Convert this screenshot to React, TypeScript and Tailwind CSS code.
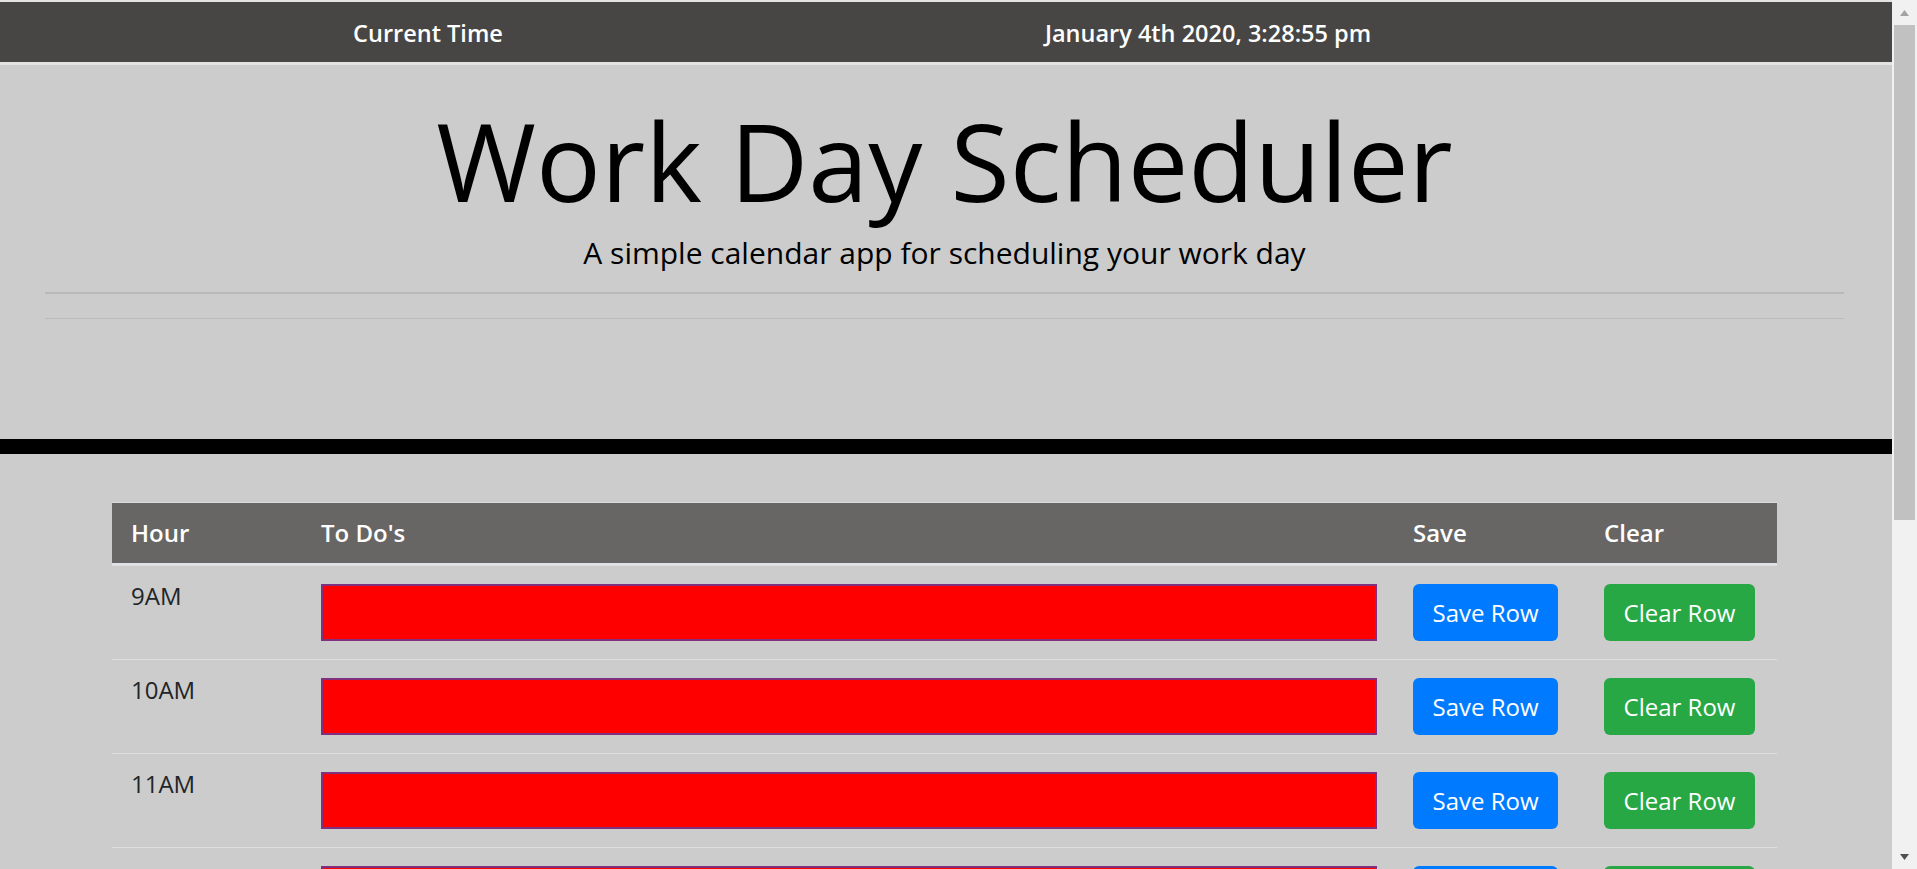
import React from 'react';

const hours = ['9AM', '10AM', '11AM', '12PM', '1PM', '2PM', '3PM', '4PM', '5PM'];

const ScheduleRow = ({ hour }: { hour: string }) => (
  <div className="flex border-t border-[#dedede]">
    <div className="w-[190px] px-[19px] pt-[12px] text-[24px] leading-[36px] text-[#212529]">{hour}</div>
    <div className="w-[1092px] pl-[19px] pr-[17px] py-[18px]">
      <textarea className="block w-full h-[57px] resize-none border-2 border-[#80307f] bg-[#ff0000] outline-none" />
    </div>
    <div className="w-[192px] pl-[19px] py-[18px]">
      <button className="h-[57px] w-[145px] rounded-[6px] bg-[#007bff] text-[24px] leading-[36px] text-white">
        Save Row
      </button>
    </div>
    <div className="w-[191px] pl-[18px] py-[18px]">
      <button className="h-[57px] w-[151px] rounded-[6px] bg-[#28a745] text-[24px] leading-[36px] text-white">
        Clear Row
      </button>
    </div>
  </div>
);

export default function App() {
  return (
    <div className="flex h-screen overflow-hidden bg-[#cccccc] font-['Open_Sans',sans-serif]">
      <div className="flex-1 overflow-hidden">
        {/* top time bar */}
        <div className="border-t-2 border-[#e4e4e4]">
          <div className="flex h-[60px] items-center bg-[#474644] pt-[4px] text-[23.5px] font-semibold text-white">
            <div className="w-[856px] text-center">Current Time</div>
            <div className="w-[704px] text-center">January 4th 2020, 3:28:55 pm</div>
          </div>
          <div className="h-[3px] bg-[#e2e2e2]" />
        </div>

        {/* jumbotron */}
        <div className="h-[374px] px-[45px] pr-[48px] pt-[31px]">
          <h1 className="text-center text-[108px] font-normal leading-[130px] text-black">Work Day Scheduler</h1>
          <p className="mt-[4px] text-center text-[30px] font-normal leading-[45px] text-black">
            A simple calendar app for scheduling your work day
          </p>
          <div className="mt-[17px] h-[2px] bg-[#b9b9b9]" />
          <div className="mt-[24px] h-px bg-[#bbbbbb]" />
        </div>
        <div className="h-[15px] bg-black" />

        {/* schedule table */}
        <div className="ml-[112px] mt-[48px] w-[1665px]">
          <div className="flex h-[61px] items-center border-t border-[#dadada] bg-[#686664] text-[24px] font-semibold text-white">
            <div className="w-[190px] px-[19px]">Hour</div>
            <div className="w-[1092px] px-[19px]">To Do's</div>
            <div className="w-[192px] px-[19px]">Save</div>
            <div className="w-[191px] px-[18px]">Clear</div>
          </div>
          <div className="h-[2px] bg-[#dee2e6]" />
          <div>
            {hours.map((h) => (
              <ScheduleRow key={h} hour={h} />
            ))}
          </div>
        </div>
      </div>

      {/* scrollbar */}
      <div className="flex w-[25px] flex-col bg-[#f1f1f1]">
        <div className="flex h-[25px] items-center justify-center">
          <svg width="9" height="6" viewBox="0 0 9 6"><path d="M4.5 0L9 6H0z" fill="#a3a3a3" /></svg>
        </div>
        <div className="mx-[2px] h-[495px] bg-[#c1c1c1]" />
        <div className="flex-1" />
        <div className="flex h-[25px] items-center justify-center">
          <svg width="9" height="6" viewBox="0 0 9 6"><path d="M0 0h9L4.5 6z" fill="#505050" /></svg>
        </div>
      </div>
    </div>
  );
}
